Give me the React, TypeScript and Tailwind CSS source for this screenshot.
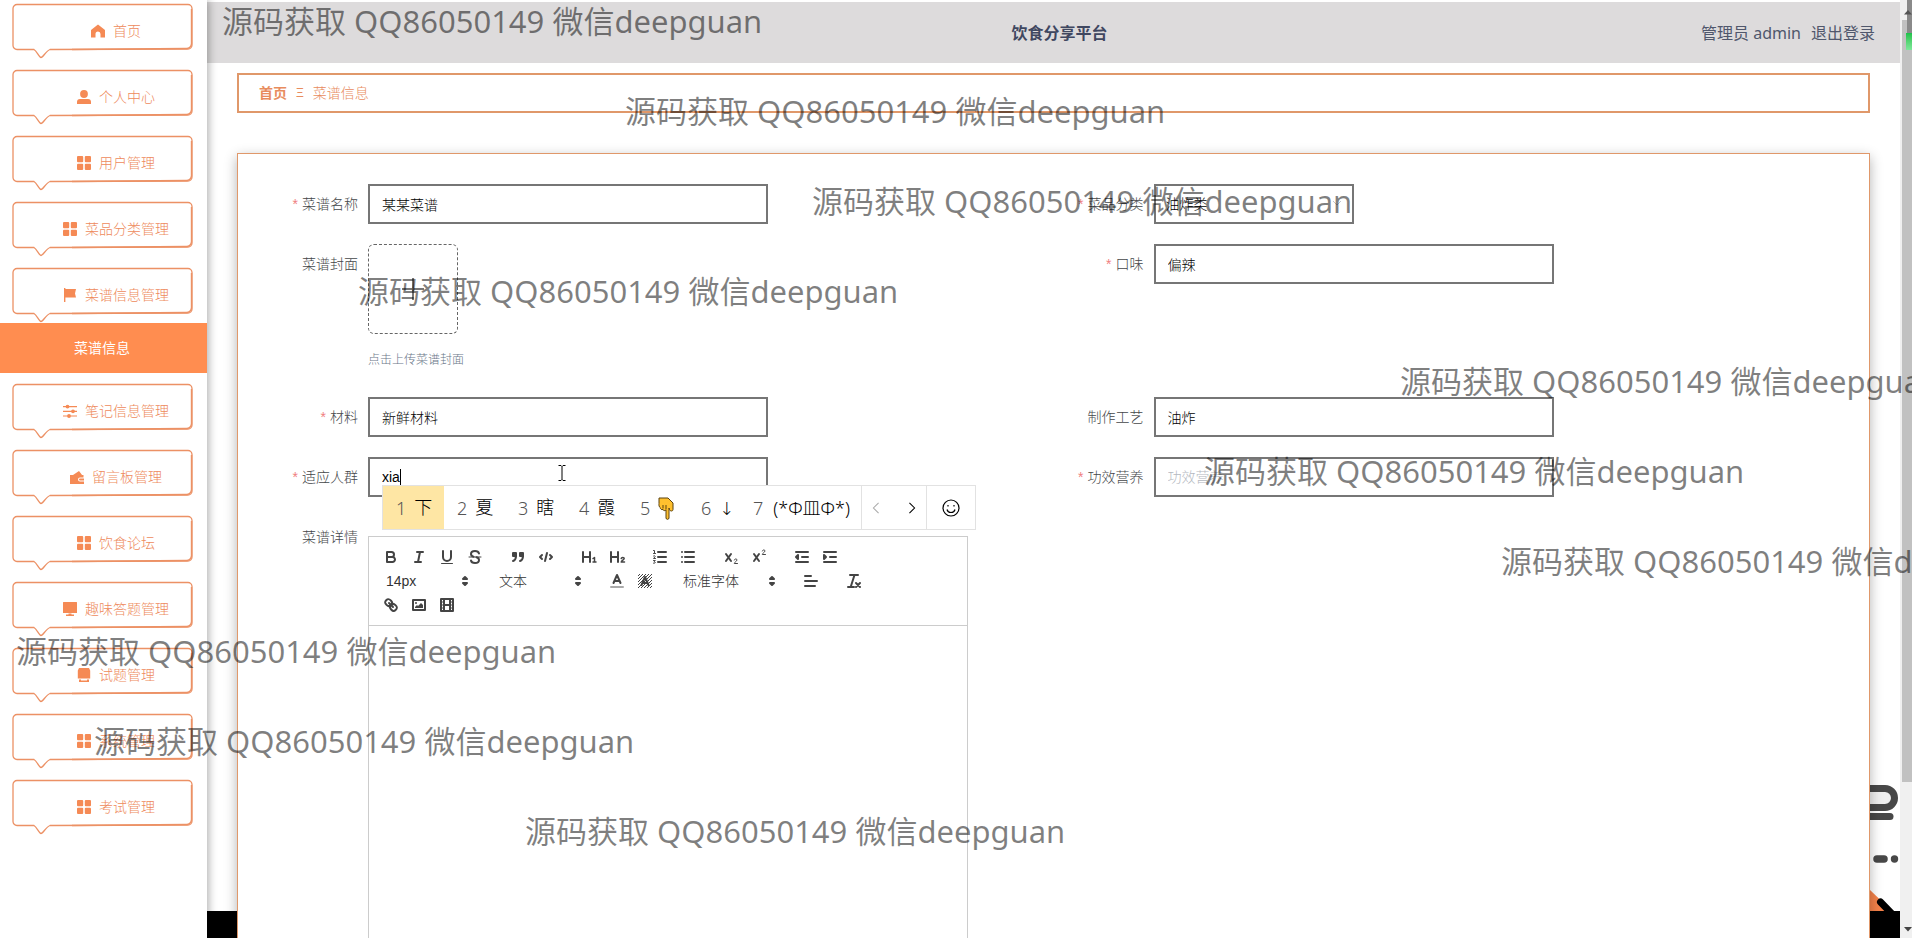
import React from 'react';

type IconName = 'home' | 'user' | 'grid' | 'flag' | 'sliders' | 'wallet' | 'monitor' | 'goods';

const MENU: { label: string; icon: IconName; child?: string }[] = [
    { label: '首页', icon: 'home' },
    { label: '个人中心', icon: 'user' },
    { label: '用户管理', icon: 'grid' },
    { label: '菜品分类管理', icon: 'grid' },
    { label: '菜谱信息管理', icon: 'flag', child: '菜谱信息' },
    { label: '笔记信息管理', icon: 'sliders' },
    { label: '留言板管理', icon: 'wallet' },
    { label: '饮食论坛', icon: 'grid' },
    { label: '趣味答题管理', icon: 'monitor' },
    { label: '试题管理', icon: 'goods' },
    { label: '系统管理', icon: 'grid' },
    { label: '考试管理', icon: 'grid' },
];

const WATERMARKS = [
    { x: 222, y: 0 },
    { x: 625, y: 90 },
    { x: 812, y: 180 },
    { x: 358, y: 270 },
    { x: 1400, y: 360 },
    { x: 1204, y: 450 },
    { x: 1501, y: 540 },
    { x: 16, y: 630 },
    { x: 94, y: 720 },
    { x: 525, y: 810 },
];

const CANDIDATES = ['下', '夏', '瞎', '霞', 'hand', '↓', '(*Φ皿Φ*)'];

function MenuIcon({ name }: { name: IconName }) {
    const shapes: Record<IconName, React.ReactNode> = {
        home: <path d="M7 .5 14 6v7.5H9.5V10a2.5 2.5 0 0 0-5 0v3.5H0V6z" />,
        user: (
            <>
                <circle cx="7" cy="4" r="3.9" />
                <path d="M0 14v-2a3 3 0 0 1 3-3h8a3 3 0 0 1 3 3v2z" />
            </>
        ),
        grid: (
            <>
                <rect width="6.2" height="6.2" rx="1" />
                <rect x="7.8" width="6.2" height="6.2" rx="1" />
                <rect y="7.8" width="6.2" height="6.2" rx="1" />
                <rect x="7.8" y="7.8" width="6.2" height="6.2" rx="1" />
            </>
        ),
        flag: <path d="M1 0h1.400v1H13L12 5.500l1 4H2.400V14.500H1z" />,
        sliders: (
            <>
                <path d="M0 2h14v1.200H0zM0 6.700h14v1.200H0zM0 11.400h14v1.200H0z" />
                <circle cx="4.500" cy="2.600" r="1.900" />
                <circle cx="10" cy="7.300" r="1.900" />
                <circle cx="6" cy="12" r="1.900" />
            </>
        ),
        wallet: <path d="M0 5h3l6-4 2.500 3.200.5.800h1.500v2.500H10a2 2 0 0 0 0 4h4V14H0zM10 8.500h4v2h-4a1 1 0 0 1 0-2z" />,
        monitor: <path d="M.5 0h13a.5.5 0 0 1 .5.500v10.500H0V.500A.5.5 0 0 1 .5 0zM5.500 11.500h3v1H11V14H3v-1.500h2.500z" />,
        goods: <path d="M2 0h10l1.200 2.500V9.500H.8V2.500zM.8 9.500h12.400v1H.8zM2 11.500h2v1h6v-1h2V14H2z" />,
    };
    return (
        <svg viewBox="0 0 14 14" className="h-3.5 w-3.5 shrink-0 fill-[#f58a55]" aria-hidden="true">
            {shapes[name]}
        </svg>
    );
}

function Bubble() {
    return (
        <svg viewBox="0 0 182 56" preserveAspectRatio="none" className="absolute inset-0 h-full w-full" aria-hidden="true">
            <path
                d="M5 1.500H176a4 4 0 0 1 4 4V42a4 4 0 0 1-4 4L38 46.500C34 48 31 54.500 29 54.500S25 48 22 46.500H5a4 4 0 0 1-4-4V5.500a4 4 0 0 1 4-4z"
                fill="none"
                stroke="#ec9165"
                strokeWidth="1.300"
            />
            <path d="M60 46.500 174 45.500a5 5 0 0 0 5.500-5V6" fill="none" stroke="#ec9165" strokeWidth="1.400" />
        </svg>
    );
}

function Sidebar() {
    return (
        <nav className="relative z-10 w-[207px] shrink-0 bg-white pt-[3px] shadow-[2px_0_8px_rgba(0,0,0,0.3)]">
            <ul>
                {MENU.map((item) => (
                    <li key={item.label} className={item.child ? '' : 'mb-2.5'}>
                        <button
                            type="button"
                            className="relative ml-3 flex h-14 w-[182px] cursor-pointer items-center justify-center gap-2 pl-[26px] text-sm text-[#ee8a5c]"
                        >
                            <Bubble />
                            <MenuIcon name={item.icon} />
                            <span>{item.label}</span>
                        </button>
                        {item.child && (
                            <a href="#recipes" className="mb-2.5 flex h-[50px] items-center bg-[#ff8d50] pl-[74px] text-sm font-normal text-white">
                                {item.child}
                            </a>
                        )}
                    </li>
                ))}
            </ul>
        </nav>
    );
}

interface FieldProps {
    id: string;
    label: string;
    required?: boolean;
    children: React.ReactNode;
}

function Field({ id, label, required, children }: FieldProps) {
    return (
        <div className="flex items-start">
            <label htmlFor={id} className="w-[100px] shrink-0 pr-2.5 text-right leading-10 text-[#45474a]">
                {required && <span className="mr-1 text-[#f08080]">*</span>}
                {label}
            </label>
            {children}
        </div>
    );
}

const inputClass =
    'h-10 w-[400px] border-2 border-[#767676] bg-white px-3 text-sm text-black outline-none placeholder:text-[#b4b8c0]';

function ToolButton({ label, children }: { label: string; children: React.ReactNode }) {
    return (
        <button type="button" aria-label={label} className="h-6 w-7 cursor-pointer px-[5px] py-[3px]">
            <svg viewBox="0 0 18 18" className="h-[18px] w-[18px] fill-none stroke-[#444] stroke-2" strokeLinecap="round" strokeLinejoin="round">
                {children}
            </svg>
        </button>
    );
}

function Picker({ label, value, wide }: { label: string; value: string; wide?: boolean }) {
    return (
        <div className={`relative mr-[15px] h-6 ${wide ? 'w-[108px]' : 'w-[98px]'}`}>
            <select aria-label={label} className="h-6 w-full appearance-none bg-transparent pl-[9px] text-sm font-light text-[#333] outline-none">
                <option>{value}</option>
            </select>
            <svg viewBox="0 0 18 18" className="pointer-events-none absolute top-[3px] right-px h-[18px] w-[18px] fill-[#444] stroke-[#444] stroke-2" strokeLinejoin="round">
                <polygon points="7 11 9 13 11 11 7 11" />
                <polygon points="7 7 9 5 11 7 7 7" />
            </svg>
        </div>
    );
}

const solid = { fill: '#444', stroke: 'none' };

function Toolbar() {
    return (
        <div className="flex flex-wrap border border-[#ccc] p-2">
            <div className="mr-[15px] flex">
                <ToolButton label="加粗">
                    <path d="M5,4H9.500A2.500,2.500,0,0,1,12,6.500v0A2.500,2.500,0,0,1,9.500,9H5A0,0,0,0,1,5,9V4A0,0,0,0,1,5,4Z" />
                    <path d="M5,9h5.500A2.500,2.500,0,0,1,13,11.500v0A2.500,2.500,0,0,1,10.500,14H5a0,0,0,0,1,0,0V9A0,0,0,0,1,5,9Z" />
                </ToolButton>
                <ToolButton label="斜体">
                    <path d="M7 4h6M5 14h6M8 14l2-10" />
                </ToolButton>
                <ToolButton label="下划线">
                    <path d="M5,3V9a4.012,4.012,0,0,0,4,4H9a4.012,4.012,0,0,0,4-4V3" />
                    <rect x="3" y="15" width="12" height="1" rx=".5" style={solid} />
                </ToolButton>
                <ToolButton label="删除线">
                    <path d="M3 9h12" className="stroke-1" />
                    <path d="M13 5.500C12.500 3.500 10.500 3 9 3 6.500 3 5 4.200 5 6c0 1.500 1 2.300 2.500 2.700M10.500 9.300C12 9.700 13 10.500 13 12c0 1.800-1.500 3-4 3-2 0-3.700-.8-4-2.500" />
                </ToolButton>
            </div>
            <div className="mr-[15px] flex">
                <ToolButton label="引用">
                    <rect x="4" y="5" width="3" height="3" style={{ fill: '#444' }} />
                    <rect x="11" y="5" width="3" height="3" style={{ fill: '#444' }} />
                    <path d="M7,8c0,4.031-3,5-3,5M14,8c0,4.031-3,5-3,5" />
                </ToolButton>
                <ToolButton label="代码块">
                    <polyline points="5 7 3 9 5 11" />
                    <polyline points="13 7 15 9 13 11" />
                    <path d="M10 5 8 13" />
                </ToolButton>
            </div>
            <div className="mr-[15px] flex">
                <ToolButton label="标题一">
                    <path d="M3 4v10M10 4v10M3 9h7" />
                    <path d="M13 10.500l1.500-1V14M13 14h3" className="stroke-[1.5]" />
                </ToolButton>
                <ToolButton label="标题二">
                    <path d="M3 4v10M10 4v10M3 9h7" />
                    <path d="M13.200 10.500c.3-1.500 3-1.400 3 0 0 1.300-2.800 2-3 3.500h3.300" className="stroke-[1.5]" />
                </ToolButton>
            </div>
            <div className="mr-[15px] flex">
                <ToolButton label="有序列表">
                    <path d="M7 4h8M7 9h8M7 14h8" />
                    <path d="M2.500 2.500h1v3M2.500 5.500h2M2.500 8c1-.8 2 0 1.500.8L2.500 10.500h2M2.500 12.500h1.800L3.200 13.700c2 .3 1 2-.7 1.500" className="stroke-1" />
                </ToolButton>
                <ToolButton label="无序列表">
                    <path d="M6 4h9M6 9h9M6 14h9M3 4h0M3 9h0M3 14h0" />
                </ToolButton>
            </div>
            <div className="mr-[15px] flex">
                <ToolButton label="下标">
                    <path d="M4 6 9 13M9 6 4 13" />
                    <path d="M12.300 12c.3-1.500 2.700-1.400 2.700 0 0 1.200-2.600 2-2.700 3.500H15.500" className="stroke-1" />
                </ToolButton>
                <ToolButton label="上标">
                    <path d="M4 6 9 13M9 6 4 13" />
                    <path d="M12.300 3c.3-1.500 2.700-1.400 2.700 0 0 1.200-2.600 2-2.700 3.500H15.500" className="stroke-1" />
                </ToolButton>
            </div>
            <div className="mr-[15px] flex">
                <ToolButton label="减少缩进">
                    <path d="M3 14h12M3 4h12M9 9h6" />
                    <polygon points="5 7 5 11 3 9 5 7" />
                </ToolButton>
                <ToolButton label="增加缩进">
                    <path d="M3 14h12M3 4h12M9 9h6" />
                    <polygon points="3 7 3 11 5 9 3 7" style={{ fill: '#444' }} />
                </ToolButton>
            </div>
            <Picker label="字号" value="14px" />
            <Picker label="段落" value="文本" />
            <div className="mr-[15px] flex">
                <ToolButton label="文字颜色">
                    <path d="M3 15h12" className="stroke-[#aaa]" />
                    <path d="M5.500 11 9 3l3.500 8M6.500 9h5" />
                </ToolButton>
                <ToolButton label="背景颜色">
                    <defs>
                        <pattern id="hatch" width="3" height="3" patternUnits="userSpaceOnUse">
                            <path d="M-1 1 1-1M0 3 3 0M2 4 4 2" stroke="#444" className="stroke-1" />
                        </pattern>
                    </defs>
                    <rect x="2" y="2" width="14" height="14" fill="url(#hatch)" stroke="none" />
                    <path d="M5.500 13 9 5l3.500 8M6.500 11h5" />
                </ToolButton>
            </div>
            <Picker label="字体" value="标准字体" wide />
            <div className="mr-[15px] flex">
                <ToolButton label="对齐">
                    <path d="M3 9h12M3 14h10M3 4h6" />
                </ToolButton>
            </div>
            <div className="mr-[15px] flex">
                <ToolButton label="清除格式">
                    <path d="M5 3h8M6 14 9.500 3M3 15h6" />
                    <path d="M11 11l4 4M15 11l-4 4" />
                </ToolButton>
            </div>
            <div className="mr-[15px] flex">
                <ToolButton label="链接">
                    <path d="M7 7l4 4" />
                    <path d="M8.900 4.577a3.476 3.476 0 0 1 .36 4.679A3.476 3.476 0 0 1 4.577 8.900C3.185 7.500 2.035 6.400 4.217 4.217S7.500 3.185 8.900 4.577Z" />
                    <path d="M13.423 9.100a3.476 3.476 0 0 0-4.679-.36 3.476 3.476 0 0 0 .36 4.679c1.392 1.392 2.500 2.542 4.679.36S14.815 10.500 13.423 9.100Z" />
                </ToolButton>
                <ToolButton label="图片">
                    <rect x="3" y="4" width="12" height="10" />
                    <circle cx="6" cy="7" r="1" style={solid} />
                    <polyline points="5 12 5 11 7 9 8 10 11 7 13 9 13 12 5 12" style={solid} />
                </ToolButton>
                <ToolButton label="视频">
                    <rect x="3" y="3" width="12" height="12" />
                    <path d="M6 3v12M12 3v12M6 9h6" />
                    <path d="M3 6h2M3 9h2M3 12h2M13 6h2M13 9h2M13 12h2" className="stroke-1" />
                </ToolButton>
            </div>
        </div>
    );
}

function candidateWidth(i: number) {
    if (i === 6) return 'w-[121px] gap-2.5';
    if (i === 5) return 'w-[52px] gap-2';
    return 'w-[61px] gap-2';
}

function ImePanel() {
    return (
        <div className="absolute top-7 left-3.5 z-20 flex h-[45px] w-[594px] items-stretch border border-[#e2e2e2] bg-white text-lg text-black">
            {CANDIDATES.map((text, i) => (
                <div key={text} className={`flex shrink-0 items-center pl-[13px] ${i === 0 ? 'bg-[#fee6a4]' : ''} ${candidateWidth(i)}`}>
                    <span className="font-['Noto_Sans',sans-serif] text-[#555]">{i + 1}</span>
                    {text === 'hand' ? (
                        <svg viewBox="0 0 16 24" className="h-6 w-4 shrink-0" aria-label="👇">
                            <path
                                d="M1 2h9l5 5v6.500c0 2-3 2-3.500 0L11 12v10c0 1.800-3 1.800-3 0v-8c-1 1-2.700.8-3-.5-1.700.5-2.700-.5-2.800-2C1 11 .8 9 1 7.500z"
                                fill="#ffc02e"
                                stroke="#5b4310"
                            />
                            <path d="M5 12.500V9M8 13.500V9" stroke="#5b4310" />
                        </svg>
                    ) : (
                        <span className={`whitespace-nowrap ${i > 4 ? "font-['Noto_Sans','DejaVu_Sans','Noto_Sans_CJK_SC',sans-serif]" : ''}`}>{text}</span>
                    )}
                </div>
            ))}
            <div className="flex flex-1 items-center justify-between border-l border-[#e2e2e2] px-2.5">
                <svg viewBox="0 0 8 14" className="h-3 w-2 fill-none stroke-[#aaa] stroke-[1.2]" aria-hidden="true">
                    <path d="M7 1 1 7l6 6" />
                </svg>
                <svg viewBox="0 0 8 14" className="h-3 w-2 fill-none stroke-black stroke-[1.2]" aria-hidden="true">
                    <path d="m1 1 6 6-6 6" />
                </svg>
            </div>
            <div className="flex w-[49px] items-center justify-center border-l border-[#e2e2e2]">
                <svg viewBox="0 0 18 18" className="h-[18px] w-[18px] fill-none stroke-black stroke-[1.2]" aria-hidden="true">
                    <circle cx="9" cy="9" r="8" />
                    <path d="M5 10.500c1 4 7 4 8 0M6 6v1.500M12 6v1.500" />
                </svg>
            </div>
        </div>
    );
}

function RecipeForm() {
    return (
        <form className="grid grid-cols-2 gap-y-5 text-sm">
            <Field id="name" label="菜谱名称" required>
                <input id="name" className={inputClass} defaultValue="某某菜谱" />
            </Field>
            <Field id="category" label="菜品分类" required>
                <div className="relative">
                    <select id="category" className="h-10 w-[200px] appearance-none border-2 border-[#767676] bg-white pl-2.5 text-sm font-light text-black outline-none">
                        <option>油炸类</option>
                    </select>
                    <svg viewBox="0 0 10 6" className="pointer-events-none absolute top-4 right-3 h-1.5 w-2.5 fill-none stroke-[#c0c4cc]" aria-hidden="true">
                        <path d="m1 1 4 4 4-4" />
                    </svg>
                </div>
            </Field>

            <Field id="cover" label="菜谱封面">
                <div className="h-[133px]">
                    <button
                        id="cover"
                        type="button"
                        aria-label="上传"
                        className="flex h-[90px] w-[90px] cursor-pointer items-center justify-center rounded-md border border-dashed border-[#666]"
                    >
                        <svg viewBox="0 0 24 24" className="h-6 w-6 stroke-[#777] stroke-2" aria-hidden="true">
                            <path d="M12 1v22M1 12h22" />
                        </svg>
                    </button>
                    <p className="mt-4 text-xs leading-5 text-[#6b7789]">点击上传菜谱封面</p>
                </div>
            </Field>
            <Field id="taste" label="口味" required>
                <input id="taste" className={inputClass} defaultValue="偏辣" />
            </Field>

            <Field id="material" label="材料" required>
                <input id="material" className={inputClass} defaultValue="新鲜材料" />
            </Field>
            <Field id="craft" label="制作工艺">
                <input id="craft" className={inputClass} defaultValue="油炸" />
            </Field>

            <Field id="crowd" label="适应人群" required>
                <div className="relative">
                    <input id="crowd" className={`${inputClass} underline decoration-dotted underline-offset-4`} defaultValue="xia" />
                    <span className="absolute top-3 left-8 h-4 w-px bg-black" />
                    <svg viewBox="0 0 8 16" className="absolute top-2 left-[190px] h-4 w-2 fill-none stroke-black" aria-hidden="true">
                        <path d="M.5.5h2.500L4 1.500 5 .5h2.500M4 1.500v13M.5 15.500h2.500L4 14.500l1 1h2.500" />
                    </svg>
                    <ImePanel />
                </div>
            </Field>
            <Field id="effect" label="功效营养" required>
                <input id="effect" className={inputClass} placeholder="功效营养" />
            </Field>

            <Field id="detail" label="菜谱详情">
                <div className="mt-[19px] w-[600px]">
                    <Toolbar />
                    <textarea id="detail" className="block h-[400px] w-full resize-none border border-t-0 border-[#ccc] p-3 outline-none" />
                </div>
            </Field>
        </form>
    );
}

// Bottom of the page wallpaper, only its edges show around the card
function Wallpaper() {
    return (
        <div className="absolute inset-x-0 bottom-0" aria-hidden="true">
            <svg viewBox="0 0 30 154" className="ml-auto block h-[154px] w-[30px]">
                <path d="M0 4.500H15a9.500 9.500 0 0 1 0 19H0" fill="#f0f0f0" stroke="#484848" strokeWidth="7" />
                <path d="M0 32.500H20" stroke="#484848" strokeWidth="7" strokeLinecap="round" />
                <path d="M7 75h7" stroke="#484848" strokeWidth="7.500" strokeLinecap="round" />
                <circle cx="24.500" cy="75" r="3.700" fill="#484848" />
                <path d="M0 106 24 129H0z" fill="#f5824a" />
                <path d="M10.500 118 24 132" stroke="#000" strokeWidth="7" strokeLinecap="round" />
            </svg>
            <div className="absolute inset-x-0 bottom-0 h-[27px] bg-black" />
        </div>
    );
}

function Scrollbar() {
    return (
        <div className="relative flex w-3 shrink-0 flex-col bg-[#f0f0f0] pt-5 pl-0.5" aria-hidden="true">
            <div className="h-[83%] bg-[#c1c1c1]" />
            <svg viewBox="0 0 8 5" className="absolute bottom-1.5 left-1 h-[5px] w-2 fill-[#444]">
                <path d="M0 0h8L4 4.500z" />
            </svg>
            <div className="absolute top-0 right-0 h-[33px] w-[5px] bg-[#8a8a8a]" />
            <div className="absolute top-[33px] right-0 h-[17px] w-[6px] bg-linear-to-b from-[#19c24a] to-[#7de89a]" />
            <svg viewBox="0 0 8 5" className="absolute top-2.5 left-1 h-[5px] w-2 fill-[#555]">
                <path d="M0 4.500h8L4 0z" />
            </svg>
        </div>
    );
}

export default function App() {
    return (
        <div className="relative flex h-screen overflow-hidden bg-white font-['Liberation_Sans','Noto_Sans_CJK_SC',sans-serif] font-light">
            <Sidebar />
            <main className="relative min-w-0 flex-1 overflow-hidden pt-0.5">
                <Wallpaper />
                <header className="relative flex h-[61px] items-center bg-[#dddbdc] pr-[25px] pl-[37px] font-['Noto_Sans','Noto_Sans_CJK_SC',sans-serif] text-base font-normal text-[#50576c]">
                    <div className="flex-1" />
                    <h1 className="font-bold text-[#3f4760]">饮食分享平台</h1>
                    <div className="flex flex-1 justify-end gap-2.5">
                        <span>管理员 admin</span>
                        <a href="#logout">退出登录</a>
                    </div>
                </header>
                <div className="relative px-[30px]">
                    <nav className="mt-2.5 flex h-10 items-center gap-2 border-2 border-[#e0986a] bg-white px-5 text-sm text-[#e88c5e]">
                        <a href="#home" className="font-bold">首页</a>
                        <span className="px-px text-xs">Ξ</span>
                        <span>菜谱信息</span>
                    </nav>
                    <section className="mt-10 border border-[#e0986a] bg-white p-[30px] shadow-[0_4px_12px_rgba(0,0,0,0.3)]">
                        <RecipeForm />
                    </section>
                </div>
            </main>
            <Scrollbar />
            <div className="pointer-events-none absolute inset-0 z-30 overflow-hidden font-['Noto_Sans','Noto_Sans_CJK_SC',sans-serif] text-[31px] leading-[42px] font-normal text-black/50">
                {WATERMARKS.map((w) => (
                    <span key={w.y} className="absolute whitespace-nowrap" style={{ left: w.x, top: w.y }}>
                        源码获取 QQ86050149 微信deepguan
                    </span>
                ))}
            </div>
        </div>
    );
}
